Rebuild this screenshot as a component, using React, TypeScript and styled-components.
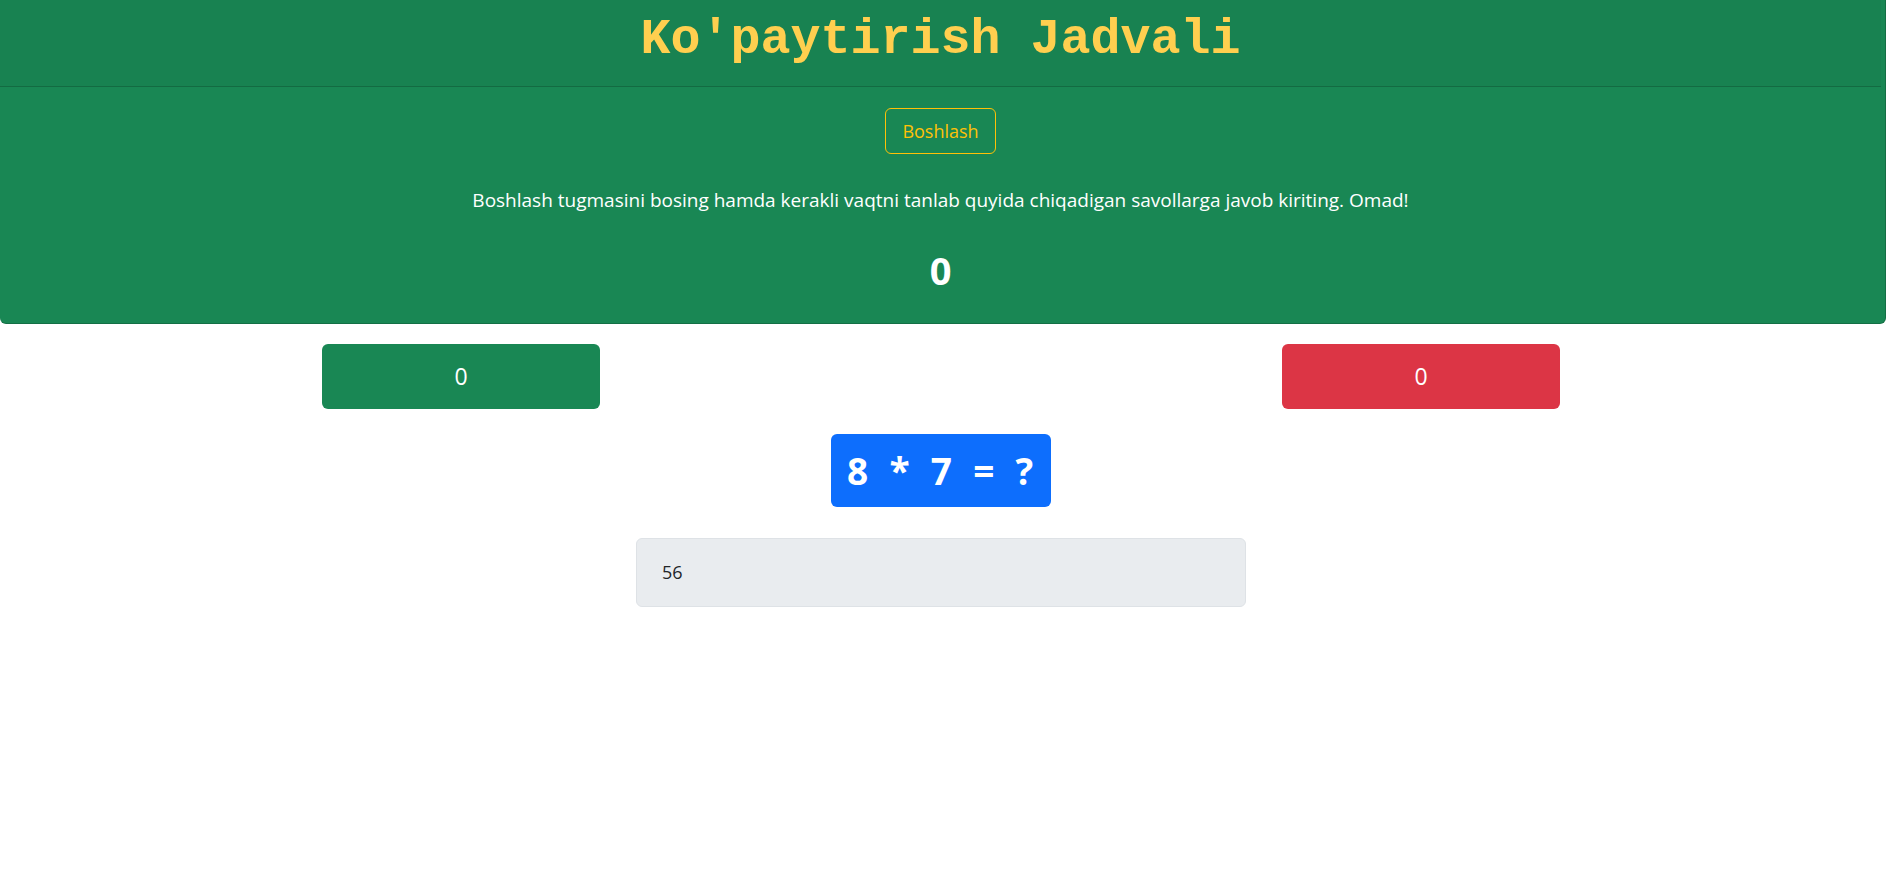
import React from "react";
import styled, { createGlobalStyle } from "styled-components";

const GlobalStyle = createGlobalStyle`
  html, body { margin: 0; padding: 0; background: #ffffff; overflow-x: hidden; }
  body { font-family: "Open Sans", "Noto Sans", Arial, sans-serif; color: #212529; }
  * { box-sizing: border-box; }
`;

const Page = styled.div`
  width: 1882px;
`;

const Panel = styled.section`
  margin-right: -4px;
  padding-right: 4px;
  background: #198754;
  border: 1px solid rgba(0, 0, 0, 0.175);
  border-top: none;
  border-left: none;
  border-radius: 0 0 6px 6px;
`;

const PanelHeader = styled.header`
  height: 87px;
  padding-top: 10px;
  background: rgba(0, 0, 0, 0.03);
  border-bottom: 1px solid rgba(0, 0, 0, 0.175);
  text-align: center;
`;

const Title = styled.h1`
  margin: 0;
  font-family: "Liberation Mono", "Courier New", monospace;
  font-weight: 700;
  font-size: 50px;
  line-height: 60px;
  color: #ffcf4f;
`;

const PanelBody = styled.div`
  display: flex;
  flex-direction: column;
  align-items: center;
  padding: 21px 0 29px;
  color: #ffffff;
`;

const StartButton = styled.button`
  height: 46px;
  padding: 0 16px;
  font-family: "Open Sans", Arial, sans-serif;
  font-size: 18px;
  color: #ffc107;
  background: transparent;
  border: 1px solid #ffc107;
  border-radius: 6px;
  cursor: pointer;
`;

const Hint = styled.p`
  margin: 33px 0 0;
  font-size: 19px;
  line-height: 27px;
  color: #ffffff;
`;

const Score = styled.div`
  margin-top: 34px;
  font-size: 38px;
  font-weight: 700;
  line-height: 45.6px;
  color: #ffffff;
`;

const Main = styled.main`
  display: flex;
  flex-direction: column;
  align-items: center;
`;

const CounterRow = styled.div`
  align-self: stretch;
  display: flex;
  justify-content: space-between;
  padding: 0 322px;
  margin-top: 20px;
`;

const Counter = styled.div<{ $tone: "good" | "bad" }>`
  width: 278px;
  height: 65px;
  display: flex;
  align-items: center;
  justify-content: center;
  border-radius: 6px;
  font-size: 23px;
  color: #ffffff;
  background: ${(p) => (p.$tone === "good" ? "#198754" : "#dc3545")};
`;

const Question = styled.div`
  margin-top: 25px;
  height: 73px;
  padding: 0 12px 0 16px;
  display: flex;
  align-items: center;
  border-radius: 6px;
  background: #0d6efd;
  color: #ffffff;
  font-size: 37px;
  font-weight: 700;
  letter-spacing: 5.8px;
  white-space: pre;
`;

const Answer = styled.input`
  margin-top: 31px;
  width: 610px;
  height: 69px;
  padding: 0 25px;
  font-family: "Open Sans", Arial, sans-serif;
  font-size: 18px;
  color: #212529;
  background: #e9ecef;
  border: 1px solid #dee2e6;
  border-radius: 6px;
  outline: none;
`;

export default function App() {
  return (
    <Page>
      <GlobalStyle />
      <Panel>
        <PanelHeader>
          <Title>Ko'paytirish Jadvali</Title>
        </PanelHeader>
        <PanelBody>
          <StartButton>Boshlash</StartButton>
          <Hint>
            Boshlash tugmasini bosing hamda kerakli vaqtni tanlab quyida chiqadigan savollarga javob kiriting. Omad!
          </Hint>
          <Score>0</Score>
        </PanelBody>
      </Panel>
      <Main>
        <CounterRow>
          <Counter $tone="good">0</Counter>
          <Counter $tone="bad">0</Counter>
        </CounterRow>
        <Question>8 * 7 = ?</Question>
        <Answer defaultValue="56" disabled />
      </Main>
    </Page>
  );
}
